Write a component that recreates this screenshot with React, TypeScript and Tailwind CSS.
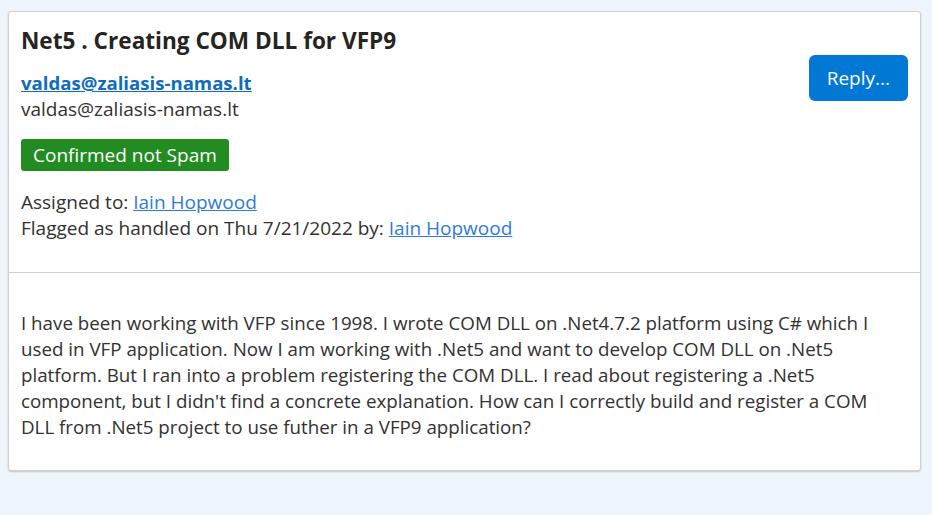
export default function App() {
  return (
    <div className="min-h-[515px] bg-[#eff5fc] pl-2 pr-[11px] pt-[11px] font-['Open_Sans',sans-serif] text-[#323130]">
      <div className="rounded-[3px] border border-[#d2d0ce] bg-white shadow-[0_1px_2px_rgba(0,0,0,0.2)]">
        <div className="flex items-start justify-between px-3 pb-[31px] pt-[14px]">
          <div>
            <h1 className="text-[22.6px] font-bold leading-[30px] text-[#252423]">
              Net5 . Creating COM DLL for VFP9
            </h1>
            <a
              href="#"
              className="mt-[14px] block text-[18.6px] font-bold leading-[26px] text-[#0f6cbd] underline"
            >
              valdas@zaliasis-namas.lt
            </a>
            <div className="text-[19px] leading-[26px]">valdas@zaliasis-namas.lt</div>
            <div className="mt-[17px] inline-block rounded-[3px] bg-[#228b22] px-3 text-[19px] leading-[32px] text-white">
              Confirmed not Spam
            </div>
            <div className="mt-[18px] text-[19px] leading-[26px]">
              Assigned to:{" "}
              <a href="#" className="text-[#2f7bd9] underline">
                Iain Hopwood
              </a>
            </div>
            <div className="text-[19px] leading-[26px]">
              Flagged as handled on Thu 7/21/2022 by:{" "}
              <a href="#" className="text-[#2f7bd9] underline">
                Iain Hopwood
              </a>
            </div>
          </div>
          <button className="mt-[29px] h-[46px] rounded-[6px] bg-[#0078d4] px-[18px] text-[19px] text-white">
            Reply...
          </button>
        </div>
        <div className="border-t border-[#d2d0ce] pb-[30px] pl-3 pr-[30px] pt-[37px] text-[18.75px] leading-[26px]">
          I have been working with VFP since 1998. I wrote COM DLL on .Net4.7.2 platform using C# which I used in VFP
          application. Now I am working with .Net5 and want to develop COM DLL on .Net5 platform. But I ran into a
          problem registering the COM DLL. I read about registering a .Net5 component, but I didn't find a concrete
          explanation. How can I correctly build and register a COM DLL from .Net5 project to use futher in a VFP9
          application?
        </div>
      </div>
    </div>
  );
}
